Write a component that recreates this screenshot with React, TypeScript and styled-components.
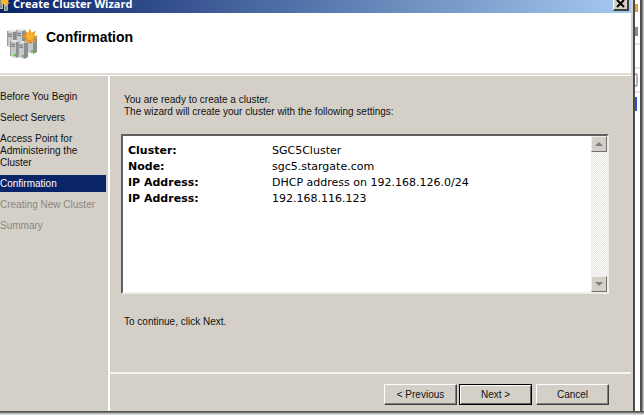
import React from "react";
import styled, { createGlobalStyle, css } from "styled-components";

const GlobalStyle = createGlobalStyle`
  * { box-sizing: border-box; }
  html, body, #root { height: 100%; }
  body {
    margin: 0;
    overflow: hidden;
    background: #fff;
    color: #111;
    font: 10px/13px "Liberation Sans", Arial, sans-serif;
  }
  button { font: inherit; color: inherit; }
`;

const face = "#d4d0c8";
const navy = "#0a246a";

const Desktop = styled.div`
  display: grid;
  grid-template-columns: minmax(0, 1fr) 9px;
  grid-template-rows: minmax(0, 1fr) 4px;
  height: 100vh;
`;

const Window = styled.main`
  display: flex;
  flex-direction: column;
  min-width: 0;
  background: ${face};
  border-right: 2px solid #4a4a4a;
  padding-right: 2px;
`;

const Behind = styled.aside`
  display: flex;
  flex-direction: column;
  background: linear-gradient(90deg, #fff 0 5px, #505050 5px 7px, #8c8c8c 7px 8px, #c8c8c8 8px);
`;

const BehindArt = styled.svg`
  display: block;
  width: 5px;
  height: 120px;
`;

const BottomShadow = styled.div`
  grid-column: 1 / -1;
  background: linear-gradient(#4c4f4a 0 1px, #7b7b7b 1px 2px, #b0b0b0 2px 3px, #dedede 3px);
`;

const TitleBar = styled.header`
  display: flex;
  align-items: flex-start;
  height: 13px;
  padding-right: 2px;
  background: linear-gradient(90deg, ${navy}, #a6caf0);
`;

const TitleIcon = styled.svg`
  flex: none;
  width: 10px;
  height: 12px;
`;

const TitleText = styled.h1`
  flex: 1;
  margin: -4px 0 0 3px;
  font: bold 11px/16px "Open Sans", "Noto Sans", sans-serif;
  color: #fff;
  white-space: nowrap;
`;

const CloseButton = styled.button`
  width: 16px;
  height: 11px;
  padding: 0;
  display: flex;
  justify-content: center;
  background: ${face};
  border: solid;
  border-width: 0 2px 2px 1px;
  border-color: #fff #404040 #404040 #fff;
`;

const Banner = styled.section`
  display: flex;
  height: 63px;
  padding: 15px 0 0 6px;
  background: linear-gradient(#fff 0 60px, #dfdcd5 60px 62px, #fff 62px);
`;

const BannerIcon = styled.svg`
  width: 32px;
  height: 32px;
`;

const Heading = styled.h2`
  margin: 1px 0 0 8px;
  font: bold 14px/16px "Liberation Sans", Arial, sans-serif;
  color: #000;
`;

const Body = styled.div`
  flex: 1;
  display: grid;
  grid-template-columns: 110px minmax(0, 1fr);
  min-height: 0;
`;

const Steps = styled.nav`
  padding: 13px 2px 0 0;
  border-right: 2px solid #fff;
`;

const StepList = styled.ol`
  margin: 0;
  padding: 0;
  list-style: none;
  display: flex;
  flex-direction: column;
  gap: 5px;
`;

const Step = styled.li<{ $state?: "current" | "pending" }>`
  padding: 2px 16px 2px 0;
  line-height: 12px;
  ${(p) => p.$state === "current" && css`background: ${navy}; color: #fff; box-shadow: 0 -1px ${navy};`}
  ${(p) => p.$state === "pending" && css`color: #8a8780; padding-right: 0;`}
`;

const Content = styled.section`
  display: flex;
  flex-direction: column;
  min-width: 0;
`;

const Intro = styled.p`
  margin: 18px 0 0 14px;
  line-height: 12px;
`;

const SettingsBox = styled.div`
  display: flex;
  height: 160px;
  margin: 16px 22px 0 11px;
  background: #fff;
  border: 2px solid;
  border-color: #606060 #efede8 #efede8 #606060;
`;

const SettingsArea = styled.div`
  flex: 1;
  padding: 7px 0 0 5px;
`;

const Settings = styled.table`
  border-collapse: collapse;
  font: 11px/16px "DejaVu Sans", Verdana, sans-serif;
  color: #000;
  th, td { padding: 0; text-align: left; white-space: nowrap; }
  th { width: 144px; }
`;

const ScrollBar = styled.div`
  display: flex;
  flex-direction: column;
  justify-content: space-between;
  width: 16px;
  background: repeating-conic-gradient(#fff 0 25%, #e4e1da 0 50%) 0 0 / 2px 2px;
`;

const ScrollButton = styled.button`
  display: flex;
  align-items: center;
  justify-content: center;
  width: 16px;
  height: 16px;
  padding: 0;
  background: ${face};
  border: 1px solid;
  border-color: #efede8 #707070 #707070 #efede8;
`;

const Hint = styled.p`
  margin: 21px 0 0 14px;
`;

const Footer = styled.footer`
  display: flex;
  margin-top: auto;
  height: 39px;
  padding: 10px 22px 0 0;
  justify-content: flex-end;
  border-top: 2px solid #f6f4f0;
`;

const Button = styled.button<{ $primary?: boolean; $apart?: boolean }>`
  width: 73px;
  height: 21px;
  margin-left: ${(p) => (p.$apart ? 4 : 2)}px;
  padding: 0;
  background: ${face};
  border: 1px solid;
  border-color: #fff #404040 #404040 #fff;
  box-shadow: inset -1px -1px #808080;
  ${(p) => p.$primary && css`border-color: #000; box-shadow: inset 1px 1px #fff, inset -1px -1px #606060;`}
`;

const steps: { label: string; state?: "current" | "pending" }[] = [
  { label: "Before You Begin" },
  { label: "Select Servers" },
  { label: "Access Point for Administering the Cluster" },
  { label: "Confirmation", state: "current" },
  { label: "Creating New Cluster", state: "pending" },
  { label: "Summary", state: "pending" },
];

const settings = [
  ["Cluster:", "SGC5Cluster"],
  ["Node:", "sgc5.stargate.com"],
  ["IP Address:", "DHCP address on 192.168.126.0/24"],
  ["IP Address:", "192.168.116.123"],
];

const towers = [
  [1, 2], [10, 1], [21, 8], [4, 12], [12, 13],
];

export default function App() {
  return (
    <>
      <GlobalStyle />
      <Desktop>
        <Window>
          <TitleBar>
            <TitleIcon viewBox="0 0 10 12" aria-hidden="true">
              <path d="M0 1h3v8H0zM4 4h4v7H4z" fill="#aeb6ba" />
              <path d="M1 2v6M6 6v4" stroke="#59656b" />
              <path d="M5 -1l1 1 3-1-1 3 2 1-3 1-1 2-2-2-3 1 1-3-2-2z" fill="#fbb833" />
              <path d="M6 10h2v1H6z" fill="#64c425" />
            </TitleIcon>
            <TitleText>Create Cluster Wizard</TitleText>
            <CloseButton aria-label="Close">
              <svg width="9" height="8" viewBox="0 0 9 8" aria-hidden="true">
                <path d="M1 0l7 7M8 0L1 7" stroke="#000" strokeWidth="2" />
              </svg>
            </CloseButton>
          </TitleBar>
          <Banner>
            <BannerIcon viewBox="0 0 32 32" aria-hidden="true">
              {towers.map(([x, y]) => (
                <g key={`${x}-${y}`}>
                  <path d={`M${x} ${y + 1}l4-1 6 1v15l-4 2-6-2z`} fill="#c6c9cb" />
                  <path d={`M${x + 6} ${y + 2}l4-1v15l-4 2z`} fill="#8b8f92" />
                  <path d={`M${x} ${y + 1}l4-1 6 1-4 1z`} fill="#eceeef" />
                  <path d={`M${x + 1} ${y + 4}l4 .5M${x + 1} ${y + 6}l4 .5`} stroke="#6c7276" />
                  <path d={`M${x + 0.5} ${y + 1}v15`} stroke="#999da0" />
                  <path d={`M${x + 4} ${y + 14}h2v2h-2z`} fill="#5cc51e" />
                </g>
              ))}
              <path d="M24 0l1.5 5L30 2.500l-2 4.500 4 1.500-4 1.500 2 5-4.500-2.500L24 17l-1.500-4.500L18 15l2-5-5-1.500 5-1.500-2-4.500L22.500 5z" fill="#f39a16" />
              <circle cx="24" cy="8.500" r="3.500" fill="#ffb02a" />
            </BannerIcon>
            <Heading>Confirmation</Heading>
          </Banner>
          <Body>
            <Steps aria-label="Wizard steps">
              <StepList>
                {steps.map((s) => (
                  <Step key={s.label} $state={s.state} aria-current={s.state === "current" ? "step" : undefined}>
                    {s.label}
                  </Step>
                ))}
              </StepList>
            </Steps>
            <Content>
              <Intro>
                You are ready to create a cluster.
                <br />
                The wizard will create your cluster with the following settings:
              </Intro>
              <SettingsBox>
                <SettingsArea>
                  <Settings>
                    <tbody>
                      {settings.map(([name, value]) => (
                        <tr key={value}>
                          <th scope="row">{name}</th>
                          <td>{value}</td>
                        </tr>
                      ))}
                    </tbody>
                  </Settings>
                </SettingsArea>
                <ScrollBar>
                  <ScrollButton aria-label="Scroll up">
                    <svg width="8" height="4" viewBox="0 0 8 4" aria-hidden="true"><path d="M0 4l4-4 4 4z" fill="#808080" /></svg>
                  </ScrollButton>
                  <ScrollButton aria-label="Scroll down">
                    <svg width="8" height="4" viewBox="0 0 8 4" aria-hidden="true"><path d="M0 0h8L4 4z" fill="#808080" /></svg>
                  </ScrollButton>
                </ScrollBar>
              </SettingsBox>
              <Hint>To continue, click Next.</Hint>
              <Footer>
                <Button>&lt; Previous</Button>
                <Button $primary>Next &gt;</Button>
                <Button $apart>Cancel</Button>
              </Footer>
            </Content>
          </Body>
        </Window>
        <Behind aria-hidden="true">
          <BehindArt viewBox="0 0 5 120">
            <path d="M0 4h3v8H0z" fill="#e99b2c" />
            <path d="M0 27h3v9H0z" fill="#7a9098" />
            <path d="M0 44h5M0 68h5M0 92h5" stroke="#d4d0c8" />
            <path d="M0 74h2v12H0" stroke="#777" fill="none" />
            <path d="M0 97h2v14H0z" fill="#2b52c8" />
          </BehindArt>
        </Behind>
        <BottomShadow />
      </Desktop>
    </>
  );
}
